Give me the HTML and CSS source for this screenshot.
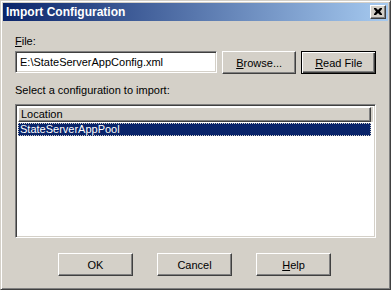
FILE: index.html
```html
<!DOCTYPE html>
<html lang="en">
<head>
  <meta charset="UTF-8">
  <title>Import Configuration</title>
  <link rel="stylesheet" href="styles.css">
</head>
<body>

<div class="window">
  <div class="titlebar">
    <span class="title">Import Configuration</span>
    <span class="close">
      <svg width="8" height="7" viewBox="0 0 8 7"><path d="M0 0h2l2 2 2-2h2v1l-2 2.5 2 2.5v1h-2l-2-2-2 2h-2v-1l2-2.5-2-2.5z" fill="#000"/></svg>
    </span>
  </div>

  <div class="content">
    <div class="label"><u>F</u>ile:</div>
    <div class="file-row">
      <div class="textbox">E:\StateServerAppConfig.xml</div>
      <button class="btn"><u>B</u>rowse...</button>
      <button class="btn default"><u>R</u>ead File</button>
    </div>

    <div class="label select-label">Select a configuration to import:</div>
    <div class="listview">
      <div class="header"><span class="col">Location</span></div>
      <div class="row selected"><span>StateServerAppPool</span></div>
    </div>

    <div class="actions">
      <button class="btn">OK</button>
      <button class="btn">Cancel</button>
      <button class="btn"><u>H</u>elp</button>
    </div>
  </div>
</div>

</body>
</html>
```

FILE: styles.css
```css
* { margin: 0; padding: 0; box-sizing: border-box; }
body { background: #d4d0c8; font-family: "Liberation Sans", Arial, sans-serif; font-size: 11px; color: #000; }

.window {
  width: 391px;
  height: 290px;
  background: #d4d0c8;
  border: 1px solid;
  border-color: #d4d0c8 #404040 #404040 #d4d0c8;
  box-shadow: inset 1px 1px 0 #fff, inset -1px -1px 0 #808080;
  padding: 2px;
}

.titlebar {
  height: 18px;
  background: linear-gradient(to right, #0a246a, #a6caf0);
  display: flex;
  align-items: center;
  justify-content: space-between;
  padding: 0 2px 0 3px;
}
.title { color: #fff; font-weight: bold; font-size: 12px; }
.close {
  width: 16px;
  height: 14px;
  background: #d4d0c8;
  border: 1px solid;
  border-color: #fff #404040 #404040 #fff;
  box-shadow: inset -1px -1px 0 #808080;
  display: flex;
  align-items: center;
  justify-content: center;
  padding-bottom: 1px;
}

.content { padding: 14px 12px 0 12px; }

.label { line-height: 13px; }
.select-label { margin-top: 10px; }

.file-row {
  display: flex;
  align-items: flex-start;
  margin-top: 3px;
  gap: 5px;
}
.textbox {
  width: 203px;
  height: 22px;
  background: #fff;
  border: 1px solid;
  border-color: #808080 #fff #fff #808080;
  box-shadow: inset 1px 1px 0 #404040, inset -1px -1px 0 #d4d0c8;
  padding: 4px 0 0 4px;
  line-height: 13px;
}

.btn {
  width: 75px;
  height: 23px;
  background: #d4d0c8;
  font: inherit;
  color: #000;
  border: 1px solid;
  border-color: #fff #404040 #404040 #fff;
  box-shadow: inset -1px -1px 0 #808080;
  display: flex;
  align-items: center;
  justify-content: center;
}
.btn.default {
  border: 1px solid #000;
  box-shadow: inset 1px 1px 0 #fff, inset -1px -1px 0 #404040, inset -2px -2px 0 #808080;
}

.listview {
  margin-top: 7px;
  height: 134px;
  background: #fff;
  border: 1px solid;
  border-color: #808080 #fff #fff #808080;
  box-shadow: inset 1px 1px 0 #404040, inset -1px -1px 0 #d4d0c8;
  padding: 2px;
}
.header {
  height: 15px;
  background: #d4d0c8;
  display: flex;
}
.col {
  flex: 1;
  border: 1px solid;
  border-color: #fff #404040 #404040 #fff;
  box-shadow: inset -1px -1px 0 #808080;
  padding-left: 2px;
  line-height: 12px;
  margin-right: 2px;
}
.row { height: 13px; line-height: 12px; }
.row.selected {
  background: #0a246a;
  color: #fff;
  outline: 1px dotted #d4d0c8;
  outline-offset: -1px;
  padding-left: 2px;
  margin-top: 1px;
  margin-right: 2px;
}

.actions {
  display: flex;
  justify-content: center;
  gap: 24px;
  margin-top: 15px;
  padding-right: 2px;
}
```
